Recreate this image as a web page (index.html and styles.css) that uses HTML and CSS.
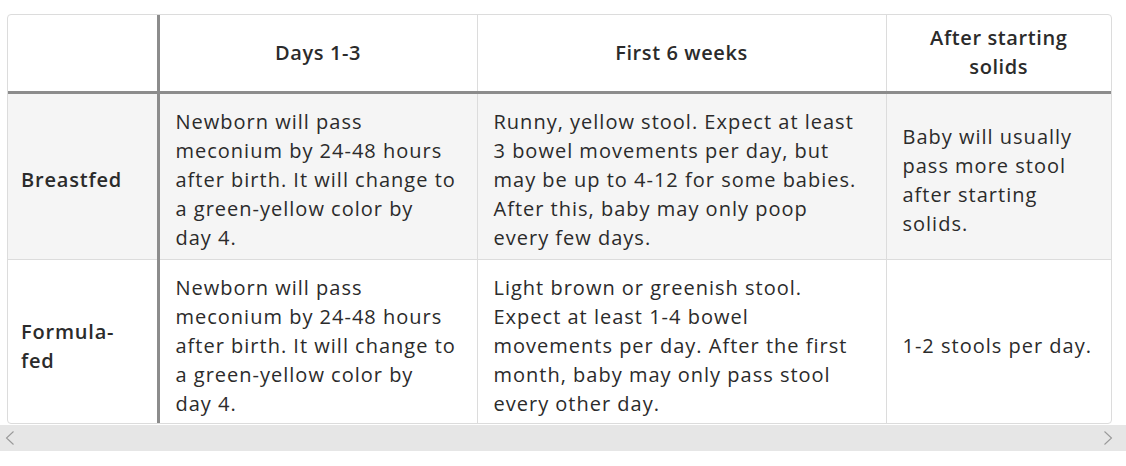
FILE: index.html
```html
<!DOCTYPE html>
<html>
<head>
<meta charset="utf-8">
<link rel="stylesheet" href="styles.css">
</head>
<body>
<div class="wrap">
  <div class="frame">
    <table class="tbl">
      <colgroup>
        <col class="c1"><col class="c2"><col class="c3"><col class="c4">
      </colgroup>
      <thead>
        <tr>
          <th class="corner"></th>
          <th>Days 1-3</th>
          <th>First 6 weeks</th>
          <th>After starting solids</th>
        </tr>
      </thead>
      <tbody>
        <tr class="shade">
          <th class="rowhead">Breastfed</th>
          <td>Newborn will pass meconium by 24-48 hours after birth. It will change to a green-yellow color by day&nbsp;4.</td>
          <td>Runny, yellow stool. Expect at least 3 bowel movements per day, but may be up to 4-12 for some babies. After this, baby may only poop every few days.</td>
          <td>Baby will usually pass more stool after starting solids.</td>
        </tr>
        <tr class="last">
          <th class="rowhead">Formula-fed</th>
          <td>Newborn will pass meconium by 24-48 hours after birth. It will change to a green-yellow color by day&nbsp;4.</td>
          <td>Light brown or greenish stool. Expect at least 1-4 bowel movements per day. After the first month, baby may only pass stool every other day.</td>
          <td>1-2 stools per day.</td>
        </tr>
      </tbody>
    </table>
  </div>
  <div class="scrollbar">
    <svg class="arrow" width="10" height="14" viewBox="0 0 10 14"><path d="M8.5 0.5 L1.5 7 L8.5 13.5" fill="none" stroke="#999" stroke-width="1.1"/></svg>
    <svg class="arrow" width="10" height="14" viewBox="0 0 10 14"><path d="M1.5 0.5 L8.5 7 L1.5 13.5" fill="none" stroke="#999" stroke-width="1.1"/></svg>
  </div>
</div>
</body>
</html>
```
FILE: styles.css
```css
html, body {
  margin: 0;
  padding: 0;
  background: #fff;
}
body {
  font-family: "Open Sans", "Liberation Sans", sans-serif;
  color: #2b2b2b;
}
.wrap {
  width: 1126px;
  padding-top: 14px;
}
.frame {
  margin-left: 7px;
  width: 1105px;
  border: 1px solid #dcdcdc;
  border-radius: 4px;
  overflow: hidden;
  box-sizing: border-box;
}
.tbl {
  width: 100%;
  border-collapse: collapse;
  table-layout: fixed;
  font-size: 20px;
  letter-spacing: 1px;
  line-height: 29px;
}
.c1 { width: 150px; }
.c2 { width: 319px; }
.c3 { width: 409px; }
.c4 { width: auto; }
.tbl th, .tbl td {
  padding: 13px 16px 7px;
  text-align: left;
  vertical-align: middle;
  border-left: 1px solid #dcdcdc;
  border-top: 1px solid #dcdcdc;
}
.tbl tr.last > * { padding-bottom: 5px; }
.tbl tr > :first-child { border-left: none; }
.tbl thead th {
  border-top: none;
  text-align: center;
  font-weight: 600;
  padding: 8px 16px 10px;
  border-bottom: 3px solid #8c8c8c;
  letter-spacing: 0.6px;
}
.tbl th.rowhead {
  font-weight: 600;
  padding-left: 13px;
  letter-spacing: 0.8px;
}
.tbl tr > :nth-child(2) { border-left: 3px solid #8c8c8c; }
.tbl tbody tr:first-child > * { border-top: none; }
.shade { background: #f5f5f5; }
.scrollbar {
  margin-top: 1px;
  height: 26px;
  background: #e6e6e6;
  display: flex;
  align-items: center;
  justify-content: space-between;
  padding: 0 13px 0 5px;
}
.arrow { display: block; }
```
